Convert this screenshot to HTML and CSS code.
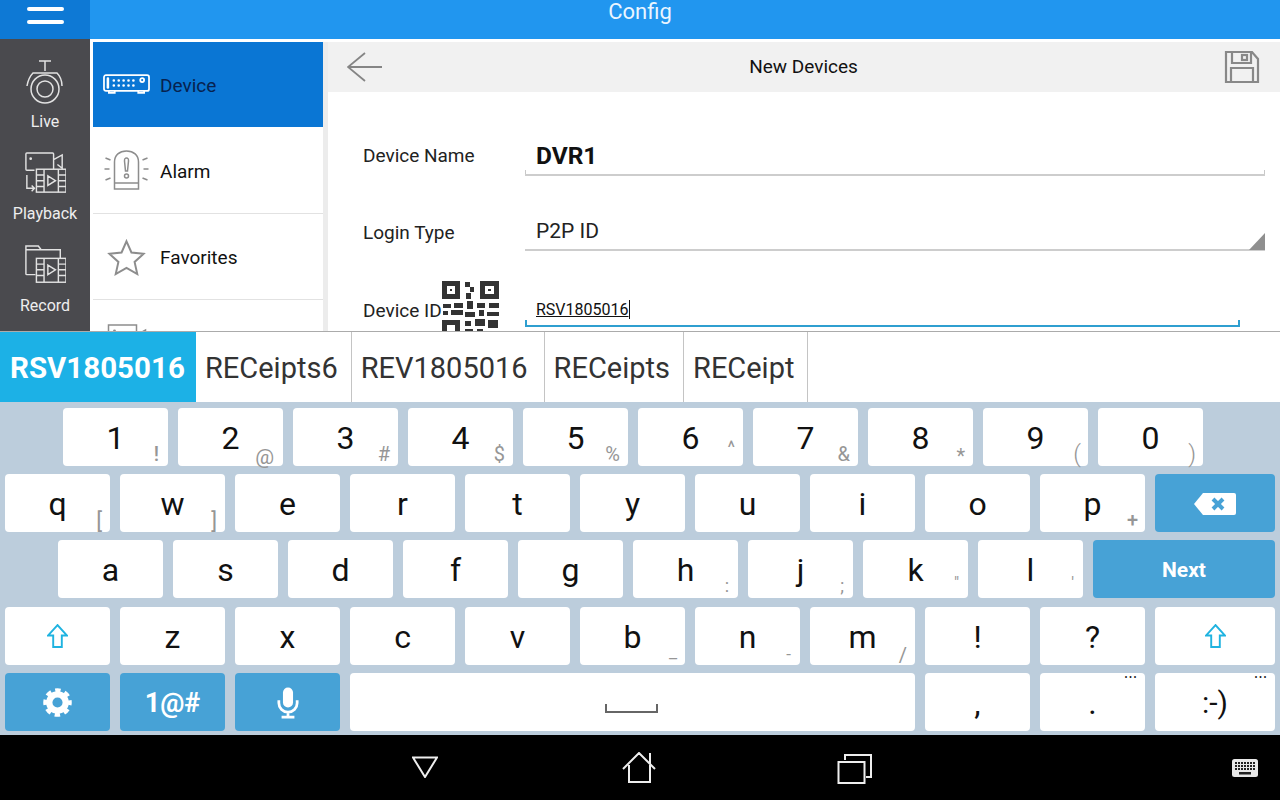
FILE: index.html
```html
<!DOCTYPE html>
<html lang="en">
<head>
<meta charset="utf-8">
<title>Config</title>
<link rel="stylesheet" href="styles.css">
</head>
<body>
<div class="screen">
  <div class="app">
    <header class="topbar">
      <div class="burger"><span></span><span></span></div>
      <div class="title">Config</div>
    </header>
    <div class="body">
      <nav class="rail">
        <div class="rail-item">
          <svg class="rail-icon" viewBox="0 0 42 44"><path d="M15 1h12M21 1v10M3 26C4 20 6 16 9 13H33C36 16 38 20 38 26"/><circle cx="21" cy="29" r="14"/><circle cx="21" cy="29" r="8"/></svg>
          <span>Live</span>
        </div>
        <div class="rail-item">
          <svg class="rail-icon" viewBox="0 0 44 46"><path d="M11 19H3a1 1 0 0 1-1-1V2a1 1 0 0 1 1-1H30a1 1 0 0 1 1 1V18M31 8l9-5V17l-5-4"/><circle cx="7" cy="7" r=".7"/><rect x="13" y="18" width="31" height="24"/><path d="M21 18V42M36 18V42M13 24h8M13 30h8M13 36h8M36 24h8M36 30h8M36 36h8M25 25l8 5-8 5zM3 24V38H10M8 35l3 3-3 3"/></svg>
          <span>Playback</span>
        </div>
        <div class="rail-item">
          <svg class="rail-icon" viewBox="0 0 44 46"><path d="M12 32H3a1 1 0 0 1-1-1V2H15l3 4H38V15M2 6H18"/><rect x="13" y="15" width="31" height="25" fill="#4a4a4e"/><path d="M21 15V40M36 15V40M13 21h8M13 27h8M13 33h8M36 21h8M36 27h8M36 33h8M25 22l8 5-8 5z"/></svg>
          <span>Record</span>
        </div>
      </nav>
      <ul class="menu">
        <li class="menu-item is-active">
          <svg class="menu-icon dvr" viewBox="0 0 48 22"><rect x="1" y="1" width="46" height="16" rx="2"/><path d="M5 4.500v9" class="thick"/><path d="M11 6.500h.1M16 6.500h.1M21 6.500h.1M26 6.500h.1M31 6.500h.1M11 11.500h.1M16 11.500h.1M21 11.500h.1M26 11.500h.1M31 11.500h.1" class="thick"/><circle cx="40" cy="6" r="2"/><path d="M6 17v2h6v-2M36 17v2h6v-2"/></svg>
          <span>Device</span>
        </li>
        <li class="menu-item">
          <svg class="menu-icon" viewBox="0 0 44 44"><path d="M10 34V13C10 6 15 2 22 2S34 6 34 13V34M10 34H34V40H10zM22 9c-2 0-2 1-2 3l1 10h2l1-10c0-2 0-3-2-3z"/><circle cx="22" cy="27" r="2"/><path d="M1 9l5 2M0 20h5M1 31l5-2M43 9l-5 2M44 20h-5M43 31l-5-2"/></svg>
          <span>Alarm</span>
        </li>
        <li class="menu-item">
          <svg class="menu-icon star" viewBox="-4 -3 52 49"><path d="M22 4l5.500 12.500 13.500 1.500-10 9 3 13.500-12-7-12 7 3-13.500-10-9 13.500-1.500z"/></svg>
          <span>Favorites</span>
        </li>
        <li class="menu-item">
          <svg class="menu-icon" viewBox="0 0 44 44"><path d="M32 32V4H4V32zM32 14l9-5V28l-9-5"/><circle cx="10" cy="10" r=".7"/></svg>
        </li>
      </ul>
      <main class="panel">
        <div class="panel-head">
          <svg class="back" viewBox="0 0 36 30"><path d="M18 1L1 15 18 29M1 15H35"/></svg>
          <div class="panel-title">New Devices</div>
          <svg class="save" viewBox="0 0 36 34"><path d="M2 2H28L34 9V32H2zM8 2V13H27V2M7 32V18H29V32"/><rect x="18" y="5" width="5" height="5"/></svg>
        </div>
        <div class="form">
          <div class="row">
            <label class="label">Device Name</label>
            <div class="field"><b class="value-name">DVR1</b></div>
          </div>
          <div class="row">
            <label class="label label-login">Login Type</label>
            <div class="field field-select"><span class="value-type">P2P ID</span><i class="caret"></i></div>
          </div>
          <div class="row">
            <label class="label label-qr">Device ID<svg class="qr" viewBox="0 0 58 58"><path d="M1 0H19V18H1zM6 5V13H14V5zM9 8H11V10H9zM39 0H58V18H39zM44 5V13H53V5zM47 8H50V10H47zM1 39H19V58H1zM6 44V53H14V44z" fill-rule="evenodd"/><path d="M24 1h5v5h-5zM29 6h4v5h-4zM25 12h5v6h-5zM2 23h8v4H2zM13 22h9v5h-9zM26 20h6v8h-6zM36 22h8v5h-8zM48 22h10v5H48zM2 30h5v4H2zM10 29h12v5H10zM24 31h10v5H24zM38 29h5v6h-5zM46 31h12v4H46zM24 40h6v5h-6zM34 38h10v7H34zM47 39h10v8H47zM24 48h8v6h-8zM36 48h6v8h-6zM44 50h13v7H44z"/></svg></label>
            <div class="field field-focus"><span class="value-id">RSV1805016</span></div>
          </div>
        </div>
      </main>
    </div>
  </div>

  <div class="suggest">
    <div class="sug is-picked">RSV1805016</div>
    <div class="sug">RECeipts6</div>
    <div class="sug sug-rev">REV1805016</div>
    <div class="sug">RECeipts</div>
    <div class="sug">RECeipt</div>
  </div>

  <section class="kbd">
    <div class="kr kr-num">
      <div class="k">1<i class="s s1">!</i></div>
      <div class="k">2<i class="s s2">@</i></div>
      <div class="k">3<i class="s s3">#</i></div>
      <div class="k">4<i class="s s4">$</i></div>
      <div class="k">5<i class="s s5">%</i></div>
      <div class="k">6<i class="s s6">^</i></div>
      <div class="k">7<i class="s s7">&amp;</i></div>
      <div class="k">8<i class="s s8">*</i></div>
      <div class="k">9<i class="s s9">(</i></div>
      <div class="k">0<i class="s s0">)</i></div>
    </div>
    <div class="kr">
      <div class="k">q<i class="s sl">[</i></div>
      <div class="k">w<i class="s sl">]</i></div>
      <div class="k">e</div>
      <div class="k">r</div>
      <div class="k">t</div>
      <div class="k">y</div>
      <div class="k">u</div>
      <div class="k">i</div>
      <div class="k">o</div>
      <div class="k">p<i class="s splus">+</i></div>
      <div class="k k-wide k-act">
        <svg class="ic-back" viewBox="0 0 42 22"><path d="M9 0H40a2 2 0 0 1 2 2V20a2 2 0 0 1-2 2H9L0 11z" fill="#fff"/><path d="M19 6l10 10M29 6L19 16" stroke="#47a2d6" stroke-width="4"/></svg>
      </div>
    </div>
    <div class="kr kr-home">
      <div class="k">a</div>
      <div class="k">s</div>
      <div class="k">d</div>
      <div class="k">f</div>
      <div class="k">g</div>
      <div class="k">h<i class="s scolon">:</i></div>
      <div class="k">j<i class="s scolon">;</i></div>
      <div class="k">k<i class="s squote">"</i></div>
      <div class="k">l<i class="s sapos">'</i></div>
      <div class="k k-next k-act">Next</div>
    </div>
    <div class="kr kr-low">
      <div class="k"><svg class="ic-shift" viewBox="0 0 22 25"><path d="M11 1L1 12H6.500V24H15.500V12H21z"/></svg></div>
      <div class="k">z</div>
      <div class="k">x</div>
      <div class="k">c</div>
      <div class="k">v</div>
      <div class="k">b<i class="s sunder">_</i></div>
      <div class="k">n<i class="s sdash">-</i></div>
      <div class="k">m<i class="s sslash">/</i></div>
      <div class="k">!</div>
      <div class="k">?</div>
      <div class="k k-wide"><svg class="ic-shift" viewBox="0 0 22 25"><path d="M11 1L1 12H6.500V24H15.500V12H21z"/></svg></div>
    </div>
    <div class="kr">
      <div class="k k-act"><svg class="ic-gear" viewBox="0 0 30 30"><circle cx="15" cy="15" r="8.500" fill="none" stroke="#fff" stroke-width="6.500"/><circle cx="15" cy="15" r="12.500" fill="none" stroke="#fff" stroke-width="4.500" stroke-dasharray="5.500 4.320" stroke-dashoffset="2.750"/></svg></div>
      <div class="k k-act k-sym">1@#</div>
      <div class="k k-act"><svg class="ic-mic" viewBox="0 0 24 34"><rect x="6.500" y="0" width="11" height="22" rx="5.500" fill="#fff"/><path d="M2 14v3a10 10 0 0 0 20 0v-3M12 27v5M5 32.500H19" fill="none" stroke="#fff" stroke-width="3"/></svg></div>
      <div class="k k-space"><i class="spacebar"></i></div>
      <div class="k">,</div>
      <div class="k">.<i class="s sdots">•••</i></div>
      <div class="k k-wide k-smile">:-)<i class="s sdots">•••</i></div>
    </div>
  </section>

  <footer class="navbar">
    <svg class="nav-back" viewBox="0 0 26 22"><path d="M1 1.500H25L13 21z"/></svg>
    <svg class="nav-home" viewBox="0 0 34 32"><path d="M1 17L17 1 33 17M28 1V12M7 13V30H28V13"/></svg>
    <svg class="nav-recent" viewBox="0 0 36 30"><path d="M8 6V1H34V23H29"/><rect x="1.500" y="8" width="26" height="21"/></svg>
    <svg class="nav-kbd" viewBox="0 0 26 18"><rect width="26" height="18" rx="2.500" fill="#e8e8e8"/><path d="M3 4h20M3 7h20M3 10h20" stroke="#222" stroke-width="2" stroke-dasharray="2 1"/><rect x="7" y="13" width="12" height="2.500" fill="#222"/></svg>
  </footer>
</div>
</body>
</html>
```
FILE: styles.css
```css
* { box-sizing: border-box; }
html, body { margin: 0; padding: 0; }
body { width: 1280px; height: 800px; overflow: hidden; font-family: Roboto, "Liberation Sans", sans-serif; background: #000; }
.screen { width: 1280px; height: 800px; display: flex; flex-direction: column; }

.app { height: 331px; flex: none; overflow: hidden; background: #fff; display: flex; flex-direction: column; }
.topbar { height: 39px; flex: none; display: grid; grid-template-columns: 90px 1fr 90px; background: #2196ef; color: #fff; }
.burger { background: #0e79d5; display: flex; flex-direction: column; gap: 9px; align-items: center; padding-top: 7px; }
.burger span { width: 37px; height: 4px; border-radius: 2px; background: #fff; }
.title { font-size: 22px; line-height: 24px; text-align: center; color: #eaf5ff; }

.body { flex: 1; display: flex; min-height: 0; }
.rail { width: 90px; flex: none; background: #4a4a4e; color: #eee; }
.rail-item { height: 92px; display: flex; flex-direction: column; align-items: center; padding-top: 21px; font-size: 16px; line-height: 18px; }
.rail-icon { width: 42px; height: 44px; flex: none; margin-bottom: 9px; fill: none; stroke: #e2e2e2; stroke-width: 1.500; }

.menu { width: 235px; flex: none; margin: 3px 0 0 3px; padding: 0; list-style: none; border-right: 5px solid #ececec; background: #fff; }
.menu-item { height: 86px; display: flex; align-items: center; gap: 10px; padding-left: 10px; padding-top: 1px; font-size: 19px; color: #111; border-bottom: 1px solid #e2e2e2; }
.menu-item.is-active { height: 85px; margin-bottom: 1px; background: #0a76d4; color: #07224f; border-bottom: 0; }
.menu-icon { width: 47px; height: 44px; flex: none; fill: none; stroke: #8d8d8d; stroke-width: 1.500; }
.menu-icon.star { stroke-width: 2.200; }
.menu-icon.dvr { height: 22px; stroke: #fff; stroke-width: 1.800; }
.dvr .thick { stroke-width: 2.600; stroke-linecap: round; }

.panel { flex: 1; min-width: 0; margin-top: 3px; }
.panel-head { height: 50px; background: #f1f1f1; display: flex; align-items: center; justify-content: space-between; padding: 0 20px 0 19px; }
.panel-title { font-size: 19px; color: #111; padding-bottom: 2px; }
.back { width: 36px; height: 30px; fill: none; stroke: #858585; stroke-width: 1.800; }
.save { width: 36px; height: 34px; fill: none; stroke: #888; stroke-width: 2.200; }

.form { padding: 33px 15px 0 35px; display: grid; grid-template-rows: 51px 50px 51px; row-gap: 25px; }
.row { display: grid; grid-template-columns: 162px 1fr; }
.label { font-size: 19px; color: #222; align-self: center; padding-top: 10px; }
.label-login { padding-top: 12px; }
.label-qr { position: relative; padding-top: 18px; }
.qr { position: absolute; left: 78px; top: 0; width: 58px; height: 58px; fill: #333; stroke: none; }
.field { position: relative; border-bottom: 2px solid #cdcdcd; padding: 16px 0 0 11px; }
.field::before, .field::after { content: ""; position: absolute; bottom: 0; width: 1px; height: 4px; background: #c8c8c8; }
.field::before { left: 0; }
.field::after { right: 0; }
.field-select { padding-top: 17px; }
.field-select::before, .field-select::after { display: none; }
.value-name { font-size: 24.500px; line-height: 29px; color: #111; display: block; }
.value-type { font-size: 21px; line-height: 26px; color: #222; display: block; }
.caret { position: absolute; right: 0; bottom: -1px; width: 0; height: 0; border-style: solid; border-width: 0 0 17px 16px; border-color: transparent transparent #8f8f8f transparent; }
.field-focus { border-bottom-color: #2f9fd0; margin-right: 25px; padding-top: 24px; }
.field-focus::before, .field-focus::after { background: #2f9fd0; height: 5px; width: 2px; }
.value-id { font-size: 16px; line-height: 19px; color: #111; text-decoration: underline; border-right: 1px solid #111; display: inline-block; }

.suggest { height: 71px; flex: none; display: flex; background: #fff; border-top: 1px solid #ababab; }
.sug { padding: 0 13px 0 9px; font-size: 29px; line-height: 72px; color: #333; border-right: 1px solid #c4c4c4; }
.sug-rev { padding-right: 16px; }
.sug.is-picked { width: 196px; padding-left: 10px; padding-right: 0; font-size: 29.500px; background: #1cb1e6; color: #fff; font-weight: 700; border-right: 0; }

.kbd { height: 333px; flex: none; background: #bccddc; padding: 6px 5px 0; }
.kr { display: flex; gap: 10px; height: 58px; margin-bottom: 8px; }
.kr-num { padding-left: 58px; }
.kr-home { padding-left: 53px; }
.kr-low { margin-top: 9px; }
.k { position: relative; width: 105px; height: 58px; flex: none; display: flex; align-items: center; justify-content: center; padding-top: 1px; background: #fff; border-radius: 4px; font-size: 32px; line-height: 58px; color: #111; }
.k-wide { width: 120px; }
.k-next { width: 182px; }
.k-space { width: 565px; }
.k-act { background: #47a2d6; color: #fff; font-size: 21px; font-weight: 700; }
.k-sym { font-size: 27px; font-weight: 700; }
.k-smile { font-size: 30px; }

.s { position: absolute; font-style: normal; font-size: 20px; line-height: 20px; color: #969696; right: 8px; bottom: 1px; }
.s2 { font-size: 21px; right: 9px; bottom: -1px; }
.s3, .s4, .s5, .s7 { right: 8px; bottom: 2px; }
.s5 { right: 8px; }
.s6 { font-size: 18px; right: 8px; bottom: 8px; }
.s8 { bottom: 0; }
.s9, .s0 { font-size: 24px; line-height: 24px; bottom: 0; right: 7px; font-weight: 300; }
.s1 { right: 9px; bottom: 2px; font-weight: 500; }
.sl { right: 8px; bottom: 0; font-size: 22px; }
.splus { right: 7px; bottom: 2px; font-weight: 500; }
.scolon { font-size: 18px; right: 9px; bottom: 2px; }
.squote { font-size: 16px; right: 9px; bottom: 5px; }
.sapos { font-size: 16px; right: 9px; bottom: 5px; }
.sunder { font-size: 18px; right: 8px; bottom: 3px; }
.sdash { font-size: 17px; right: 9px; bottom: 1px; }
.sslash { font-size: 20px; right: 8px; bottom: 0; }
.sdots { font-size: 9px; line-height: 8px; color: #111; right: 7px; bottom: auto; top: 0; letter-spacing: 1.500px; }
.spacebar { display: block; width: 53px; height: 9px; border: 2px solid #666; border-top: 0; margin-top: 12px; margin-left: -18px; position: relative; left: 8px; }

.ic-shift { width: 21px; height: 24px; fill: none; stroke: #1fb3e0; stroke-width: 2; margin-top: -2px; }
.ic-back { width: 42px; height: 22px; }
.ic-gear { width: 29px; height: 29px; }
.ic-mic { width: 22px; height: 32px; }

.navbar { position: relative; flex: 1; background: #000; }
.navbar svg { position: absolute; fill: none; stroke: #eee; stroke-width: 2; }
.nav-back { left: 412px; top: 21px; width: 26px; height: 22px; }
.nav-home { left: 622px; top: 17px; width: 34px; height: 32px; }
.nav-recent { left: 837px; top: 19px; width: 36px; height: 30px; }
.navbar .nav-kbd { left: 1232px; top: 24px; width: 26px; height: 18px; stroke: none; }
```
